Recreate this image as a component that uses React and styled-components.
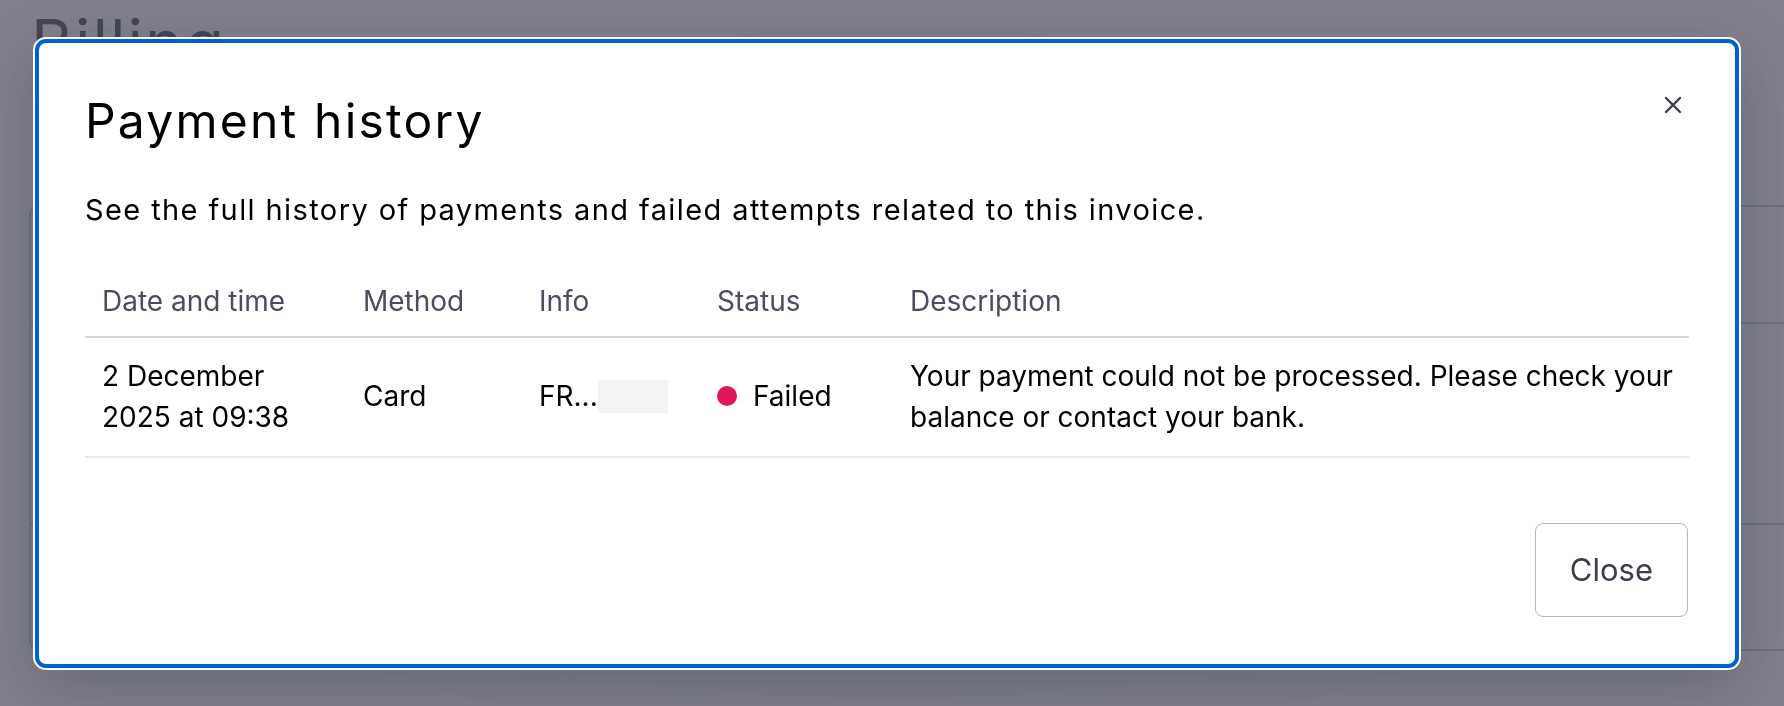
import React from 'react';
import styled, { createGlobalStyle } from 'styled-components';

const GlobalStyle = createGlobalStyle`
  html, body {
    margin: 0;
    padding: 0;
    height: 100%;
    overflow: hidden;
    background: #fff;
    font-family: Inter, "Noto Sans", "Liberation Sans", sans-serif;
  }
`;

const payments = [
  {
    id: 1,
    date: '2 December 2025 at 09:38',
    method: 'Card',
    info: 'FR...',
    status: 'Failed',
    description:
      'Your payment could not be processed. Please check your balance or contact your bank.',
  },
];

const App = () => {
  return (
    <>
      <GlobalStyle />
      <Page>
        <PageTitle>Billing</PageTitle>
        <Card>
          <CardRow h={115} />
          <CardRow h={199} />
          <CardRow h={124} last />
        </Card>
      </Page>

      <Overlay>
        <Dialog role='dialog' aria-labelledby='payment-history-title'>
          <CloseX aria-label='Close'>
            <svg width='18' height='18' viewBox='0 0 18 18' fill='none'>
              <path
                d='M2 2L16 16M16 2L2 16'
                stroke='#3b3e4b'
                strokeWidth='2.4'
                strokeLinecap='round'
              />
            </svg>
          </CloseX>

          <Title id='payment-history-title'>Payment history</Title>
          <Lead>
            See the full history of payments and failed attempts related to this
            invoice.
          </Lead>

          <Table>
            <colgroup>
              <col style={{ width: 261 }} />
              <col style={{ width: 176 }} />
              <col style={{ width: 178 }} />
              <col style={{ width: 193 }} />
              <col />
            </colgroup>
            <thead>
              <tr>
                <Th>Date and time</Th>
                <Th>Method</Th>
                <Th>Info</Th>
                <Th>Status</Th>
                <Th>Description</Th>
              </tr>
            </thead>
            <tbody>
              {payments.map((p) => (
                <tr key={p.id}>
                  <Td>{p.date}</Td>
                  <Td>{p.method}</Td>
                  <Td>
                    <Info>
                      {p.info}
                      <Redacted />
                    </Info>
                  </Td>
                  <Td>
                    <Status>
                      <Dot />
                      {p.status}
                    </Status>
                  </Td>
                  <Td>{p.description}</Td>
                </tr>
              ))}
            </tbody>
          </Table>

          <Footer>
            <Button type='button'>Close</Button>
          </Footer>
        </Dialog>
      </Overlay>
    </>
  );
};

export default App;

const Page = styled.div`
  height: 100vh;
  padding: 4px 0 0 29px;
  box-sizing: border-box;
`;

const PageTitle = styled.h1`
  margin: 0 0 124px 2px;
  font-size: 64px;
  font-weight: 400;
  letter-spacing: 2px;
  line-height: 77px;
  color: #141624;
`;

const Card = styled.div`
  border: 2px solid #bcbdc7;
  border-right: none;
  border-radius: 10px 0 0 10px;
  height: 446px;
  box-sizing: border-box;
`;

const CardRow = styled.div`
  height: ${(p) => p.h}px;
  border-bottom: ${(p) => (p.last ? 'none' : '2px solid #bcbdc7')};
`;

const Overlay = styled.div`
  position: fixed;
  inset: 0;
  background: radial-gradient(
      ellipse at 50% 55%,
      rgba(40, 42, 58, 0.12) 0%,
      rgba(40, 42, 58, 0) 70%
    ),
    rgba(85, 86, 101, 0.75);
  padding: 39px 0 0 35px;
`;

const Dialog = styled.div`
  position: relative;
  width: 1704px;
  box-sizing: border-box;
  background: #fff;
  border: 4px solid #0062d1;
  border-radius: 11px;
  box-shadow: 0 0 0 2px #fff, 0 18px 60px rgba(20, 22, 36, 0.22);
  padding: 49px 46px 47px;
  color: #000;
`;

const CloseX = styled.button`
  position: absolute;
  top: 53px;
  right: 53px;
  width: 18px;
  height: 18px;
  padding: 0;
  border: none;
  background: none;
  display: flex;
  cursor: pointer;
`;

const Title = styled.h2`
  margin: 0 0 40px;
  font-size: 48px;
  font-weight: 400;
  line-height: 57.6px;
  letter-spacing: 2.2px;
  color: #000;
`;

const Lead = styled.p`
  margin: 0 0 52px;
  font-size: 29px;
  line-height: 39px;
  letter-spacing: 1.4px;
  color: #000;
`;

const Table = styled.table`
  width: 100%;
  border-collapse: collapse;
  table-layout: fixed;
  font-size: 28px;
  line-height: 41px;
`;

const Th = styled.th`
  text-align: left;
  font-weight: 400;
  color: #4a4d5d;
  padding: 0 17px 14px;
  border-bottom: 2px solid #d6d6dc;
`;

const Td = styled.td`
  padding: 18px 8px 18px 17px;
  vertical-align: middle;
  color: #000;
  border-bottom: 2px solid #e7e7ea;
`;

const Info = styled.span`
  display: inline-flex;
  align-items: center;
`;

const Redacted = styled.span`
  display: inline-block;
  width: 70px;
  height: 33px;
  background: #f4f4f5;
`;

const Status = styled.span`
  display: inline-flex;
  align-items: center;
  gap: 16px;
`;

const Dot = styled.span`
  width: 20px;
  height: 20px;
  border-radius: 50%;
  background: #e2165c;
`;

const Footer = styled.div`
  display: flex;
  justify-content: flex-end;
  margin-top: 65px;
  padding-right: 1px;
`;

const Button = styled.button`
  height: 94px;
  padding: 0 34px;
  border: 1.5px solid #b6b6bd;
  border-radius: 8px;
  background: #fff;
  font-family: Inter, "Noto Sans", "Liberation Sans", sans-serif;
  font-size: 31px;
  color: #3a3d4b;
  cursor: pointer;
`;
